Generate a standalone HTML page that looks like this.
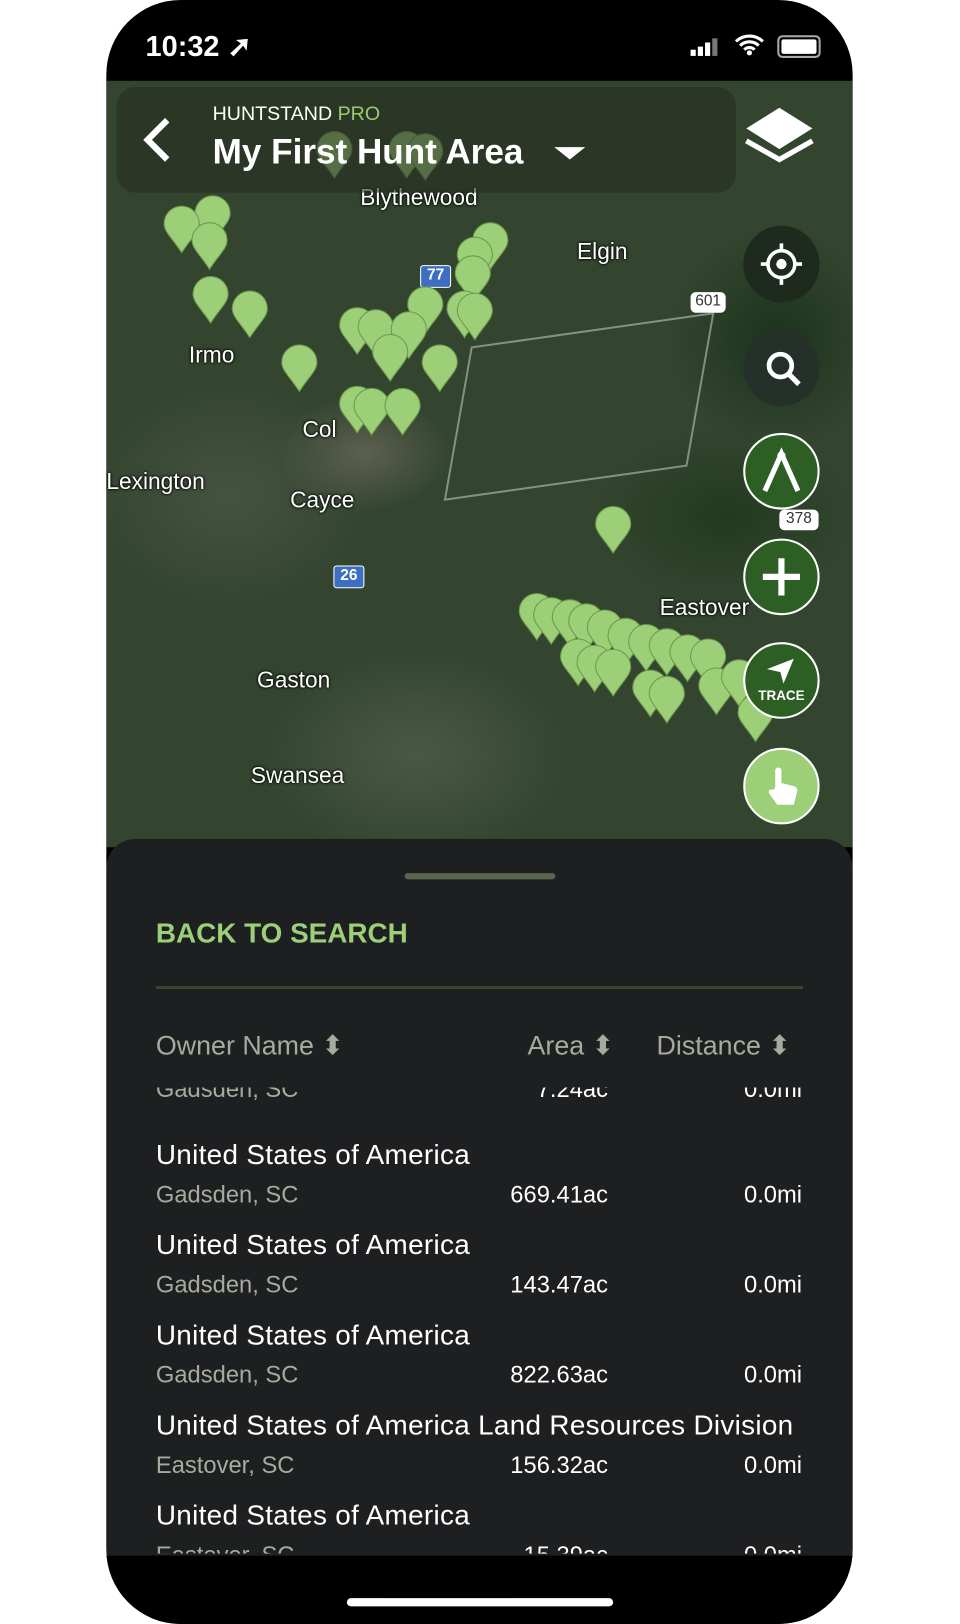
<!DOCTYPE html>
<html><head><meta charset="utf-8"><style>
html,body{margin:0;padding:0;background:#fff;width:960px;height:1624px;overflow:hidden}
#w{position:absolute;left:0;top:0;width:930px;height:1568px;transform:scale(1.03226,1.03571);transform-origin:0 0;font-family:"Liberation Sans",sans-serif}
.phone{position:absolute;left:103px;top:0;width:723px;height:1568px;background:#000;border-radius:72px;overflow:hidden}
.map{position:absolute;left:0;top:78px;width:723px;height:740px;background:
radial-gradient(ellipse 120px 80px at 250px 360px,#5d604f 0%,transparent 70%),
radial-gradient(ellipse 200px 160px at 120px 400px,#465240 0%,transparent 70%),
radial-gradient(ellipse 180px 120px at 600px 420px,#223a1f 0%,transparent 70%),
radial-gradient(ellipse 220px 150px at 300px 650px,#4a5843 0%,transparent 70%),
radial-gradient(ellipse 150px 150px at 650px 250px,#1c331c 0%,transparent 70%),
#33452f}
.lbl{position:absolute;color:#fff;font-size:22px;text-shadow:0 0 3px #000,0 0 2px #000}
.sheet{position:absolute;left:0;top:810px;width:723px;height:700px;background:#1e1f21;border-radius:28px 28px 0 0}
.btn{position:absolute;left:617px;width:74px;height:74px;border-radius:50%}
.t{position:absolute;color:#fff;font-size:27px;white-space:nowrap;letter-spacing:.3px}
.s{position:absolute;color:#a7ab9d;font-size:23px;white-space:nowrap}
.v{position:absolute;color:#fff;font-size:23px;white-space:nowrap;text-align:right}
</style></head><body><div id="w">
<div class="phone">
<div style="position:absolute;left:38px;top:28px;color:#fff;font-size:28px;font-weight:600">10:32 ➚</div>
<div style="position:absolute;left:566px;top:36px;width:28px;height:18px">
<div style="position:absolute;left:0;bottom:0;width:5px;height:6px;background:#fff"></div><div style="position:absolute;left:7px;bottom:0;width:5px;height:9px;background:#fff"></div><div style="position:absolute;left:14px;bottom:0;width:5px;height:13px;background:#fff"></div><div style="position:absolute;left:21px;bottom:0;width:5px;height:17px;background:#777"></div></div>
<svg style="position:absolute;left:608px;top:32px" width="30" height="22" viewBox="0 0 30 22"><path d="M2 8a19 19 0 0 1 26 0M6 12a13 13 0 0 1 18 0M10 16a7 7 0 0 1 10 0" stroke="#fff" stroke-width="3" fill="none"/><circle cx="15" cy="19" r="2.5" fill="#fff"/></svg>
<div style="position:absolute;left:650px;top:34px;width:38px;height:18px;border:2px solid #aaa;border-radius:5px"><div style="margin:2px;height:14px;width:34px;background:#fff;border-radius:2px"></div></div>
<div class="map">
<div style="position:absolute;left:340px;top:240px;width:232px;height:145px;border:2px solid rgba(220,220,220,.5);transform:skew(-10deg,-8deg)"></div>
<div class="lbl" style="left:246px;top:100px">Blythewood</div>
<div class="lbl" style="left:456px;top:152px">Elgin</div>
<div class="lbl" style="left:80px;top:252px">Irmo</div>
<div class="lbl" style="left:190px;top:324px">Col</div>
<div class="lbl" style="left:0;top:374px">Lexington</div>
<div class="lbl" style="left:178px;top:392px">Cayce</div>
<div class="lbl" style="left:536px;top:496px">Eastover</div>
<div class="lbl" style="left:146px;top:566px">Gaston</div>
<div class="lbl" style="left:140px;top:658px">Swansea</div>
<div style="position:absolute;left:304px;top:178px;width:28px;height:20px;background:#3d6ec1;color:#fff;font-size:15px;font-weight:bold;text-align:center;border:1px solid #fff;border-radius:3px">77</div>
<div style="position:absolute;left:220px;top:468px;width:28px;height:20px;background:#3d6ec1;color:#fff;font-size:15px;font-weight:bold;text-align:center;border:1px solid #fff;border-radius:3px">26</div>
<div style="position:absolute;left:566px;top:204px;width:34px;height:20px;background:#fff;color:#333;font-size:15px;text-align:center;border-radius:5px">601</div>
<svg width="723" height="740" style="position:absolute;left:0;top:0">
<defs><path id="p" d="M17 44C8 30 0 24 0 16a17 17 0 0 1 34 0c0 8-8 14-17 28z" fill="#9ccf78" stroke="#6a9a4c" stroke-width="1"/></defs>
<g>
<use href="#p" x="86" y="112"/><use href="#p" x="56" y="122"/><use href="#p" x="83" y="138"/><use href="#p" x="84" y="190"/><use href="#p" x="122" y="204"/><use href="#p" x="170" y="256"/>
<use href="#p" x="355" y="138"/><use href="#p" x="340" y="152"/><use href="#p" x="338" y="170"/><use href="#p" x="292" y="200"/><use href="#p" x="330" y="204"/><use href="#p" x="340" y="206"/>
<use href="#p" x="226" y="220"/><use href="#p" x="244" y="222"/><use href="#p" x="276" y="224"/><use href="#p" x="258" y="246"/><use href="#p" x="306" y="256"/>
<use href="#p" x="226" y="296"/><use href="#p" x="240" y="298"/><use href="#p" x="270" y="298"/>
<use href="#p" x="474" y="412"/>
<use href="#p" x="400" y="496"/><use href="#p" x="414" y="500"/><use href="#p" x="432" y="502"/><use href="#p" x="448" y="506"/><use href="#p" x="466" y="512"/><use href="#p" x="486" y="520"/><use href="#p" x="506" y="526"/><use href="#p" x="526" y="530"/><use href="#p" x="546" y="536"/><use href="#p" x="566" y="540"/>
<use href="#p" x="440" y="540"/><use href="#p" x="456" y="546"/><use href="#p" x="474" y="550"/><use href="#p" x="510" y="570"/><use href="#p" x="526" y="576"/><use href="#p" x="574" y="568"/><use href="#p" x="596" y="560"/><use href="#p" x="612" y="594"/>
<use href="#p" x="204" y="50"/><use href="#p" x="274" y="50"/><use href="#p" x="292" y="52"/>
</g></svg>
<div style="position:absolute;left:10px;top:6px;width:600px;height:102px;background:rgba(40,45,35,.6);border-radius:18px"></div>
<svg style="position:absolute;left:32px;top:34px" width="34" height="46" viewBox="0 0 34 46"><path d="M27 4 8 23l19 19" stroke="#fff" stroke-width="6" fill="none"/></svg>
<div style="position:absolute;left:103px;top:22px;color:#fff;font-size:19px">HUNTSTAND <span style="color:#9acd6f">PRO</span></div>
<div style="position:absolute;left:103px;top:50px;color:#fff;font-size:34px;font-weight:bold">My First Hunt Area</div>
<div style="position:absolute;left:434px;top:64px;width:0;height:0;border-left:15px solid transparent;border-right:15px solid transparent;border-top:12px solid #fff"></div>
<svg style="position:absolute;left:616px;top:22px" width="72" height="72" viewBox="0 0 72 72"><path d="M4 36l32 18 32-18" stroke="#fff" stroke-width="5" fill="none"/><path d="M36 4 68 24 36 44 4 24z" fill="#fff"/></svg>
<div class="btn" style="top:140px;background:#1f2a1f"></div>
<svg style="position:absolute;left:632px;top:155px" width="44" height="44" viewBox="0 0 44 44"><circle cx="22" cy="22" r="13" stroke="#fff" stroke-width="3.5" fill="none"/><circle cx="22" cy="22" r="5" fill="#fff"/><path d="M22 2v8M22 34v8M2 22h8M34 22h8" stroke="#fff" stroke-width="3.5"/></svg>
<div class="btn" style="top:240px;background:#26302a"></div>
<svg style="position:absolute;left:636px;top:258px" width="40" height="40" viewBox="0 0 40 40"><circle cx="17" cy="17" r="11" stroke="#fff" stroke-width="4.5" fill="none"/><path d="M25 25l10 10" stroke="#fff" stroke-width="5"/></svg>
<div class="btn" style="top:340px;background:#2d5e24;border:2px solid #fff;box-sizing:border-box"></div>
<svg style="position:absolute;left:632px;top:352px" width="44" height="50" viewBox="0 0 44 50"><path d="M6 44 22 8l16 36" stroke="#fff" stroke-width="5" fill="none"/><circle cx="22" cy="10" r="4" fill="#fff"/></svg>
<div style="position:absolute;left:652px;top:414px;width:38px;height:20px;background:#fff;color:#333;font-size:15px;text-align:center;border-radius:5px">378</div>
<div class="btn" style="top:442px;background:#2d5e24;border:2px solid #fff;box-sizing:border-box"></div>
<svg style="position:absolute;left:634px;top:459px" width="40" height="40"><path d="M20 2v36M2 20h36" stroke="#fff" stroke-width="6"/></svg>
<div class="btn" style="top:542px;background:#2d5e24;border:2px solid #fff;box-sizing:border-box"></div>
<svg style="position:absolute;left:638px;top:556px" width="30" height="28" viewBox="0 0 30 28"><path d="M2 12 28 2 18 26 15 15z" fill="#fff"/></svg>
<div style="position:absolute;left:617px;top:586px;width:74px;text-align:center;color:#fff;font-size:13px;font-weight:bold">TRACE</div>
<div class="btn" style="top:644px;background:#9ccf78;border:2px solid #fff;box-sizing:border-box"></div>
<svg style="position:absolute;left:638px;top:660px" width="34" height="42" viewBox="0 0 34 42"><path d="M10 22V6a3 3 0 0 1 6 0v12l12 3c3 1 4 3 3 6l-3 12H12L4 28c-1-3 2-5 4-3z" fill="#fff"/></svg>
</div>
<div class="sheet">
<div style="position:absolute;left:289px;top:33px;width:146px;height:6px;background:#5a6650;border-radius:3px"></div>
<div style="position:absolute;left:48px;top:76px;color:#9ccf78;font-size:27px;font-weight:bold">BACK TO SEARCH</div>
<div style="position:absolute;left:48px;top:142px;width:627px;height:3px;background:#3a4530"></div>
<div class="s" style="left:48px;top:184px;font-size:26px">Owner Name ⬍</div>
<div class="s" style="left:408px;top:184px;font-size:26px">Area ⬍</div>
<div class="s" style="left:533px;top:184px;font-size:26px">Distance ⬍</div>
<div style="position:absolute;left:0;top:240px;width:723px;height:450px;overflow:hidden">
<div class="s" style="left:48px;top:-12px">Gadsden, SC</div><div class="v" style="left:380px;width:106px;top:-12px">7.24ac</div><div class="v" style="left:560px;width:114px;top:-12px">0.0mi</div>
<div class="t" style="left:48px;top:50px">United States of America</div>
<div class="s" style="left:48px;top:90px">Gadsden, SC</div><div class="v" style="left:380px;width:106px;top:90px">669.41ac</div><div class="v" style="left:560px;width:114px;top:90px">0.0mi</div>
<div class="t" style="left:48px;top:137px">United States of America</div>
<div class="s" style="left:48px;top:177px">Gadsden, SC</div><div class="v" style="left:380px;width:106px;top:177px">143.47ac</div><div class="v" style="left:560px;width:114px;top:177px">0.0mi</div>
<div class="t" style="left:48px;top:224px">United States of America</div>
<div class="s" style="left:48px;top:264px">Gadsden, SC</div><div class="v" style="left:380px;width:106px;top:264px">822.63ac</div><div class="v" style="left:560px;width:114px;top:264px">0.0mi</div>
<div class="t" style="left:48px;top:311px">United States of America Land Resources Division</div>
<div class="s" style="left:48px;top:351px">Eastover, SC</div><div class="v" style="left:380px;width:106px;top:351px">156.32ac</div><div class="v" style="left:560px;width:114px;top:351px">0.0mi</div>
<div class="t" style="left:48px;top:398px">United States of America</div>
<div class="s" style="left:48px;top:438px">Eastover, SC</div><div class="v" style="left:380px;width:106px;top:438px">15.39ac</div><div class="v" style="left:560px;width:114px;top:438px">0.0mi</div>
</div>
</div>
<div style="position:absolute;left:0;top:1502px;width:723px;height:66px;background:#000"></div>
<div style="position:absolute;left:233px;top:1543px;width:258px;height:8px;background:#fff;border-radius:4px"></div>
</div>
</div></body></html>
